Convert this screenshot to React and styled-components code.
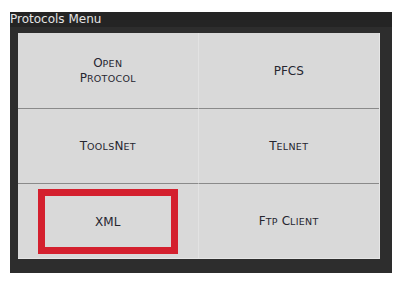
import styled, { createGlobalStyle } from 'styled-components';

const GlobalStyle = createGlobalStyle`
  body {
    margin: 0;
    background: #fff;
    font-family: "DejaVu Sans", Verdana, sans-serif;
  }
`;

const protocols = [
  { id: 'open', label: ['Open', 'Protocol'] },
  { id: 'pfcs', label: ['PFCS'] },
  { id: 'toolsnet', label: ['ToolsNet'] },
  { id: 'telnet', label: ['Telnet'] },
  { id: 'xml', label: ['XML'], selected: true },
  { id: 'ftp', label: ['Ftp Client'] },
];

// split text into runs so lowercase letters can be drawn as smaller capitals
const toRuns = (text) => text.match(/[a-z]+|[^a-z]+/g) || [];

const SmallCaps = ({ text }) =>
  toRuns(text).map((run, i) =>
    /[a-z]/.test(run) ? <Small key={i}>{run.toUpperCase()}</Small> : <span key={i}>{run}</span>
  );

const App = () => (
  <>
    <GlobalStyle />
    <Panel>
      <Title>Protocols Menu</Title>
      <Body>
        <Grid>
          {protocols.map((p) => (
            <Cell key={p.id}>
              <Button $selected={p.selected}>
                {p.label.map((line) => (
                  <Line key={line}>
                    <SmallCaps text={line} />
                  </Line>
                ))}
              </Button>
            </Cell>
          ))}
        </Grid>
      </Body>
    </Panel>
  </>
);

const Panel = styled.div`
  margin: 12px 0 0 10px;
  width: 382px;
  height: 261px;
  background: #2d2d2d;
  display: flex;
  flex-direction: column;
`;

const Title = styled.div`
  height: 15px;
  line-height: 15px;
  background: #242424;
  color: #e4e4e4;
  font-size: 12px;
`;

const Body = styled.div`
  flex: 1;
  padding: 6px 12px 15px 8px;
`;

const Grid = styled.div`
  display: grid;
  grid-template-columns: 1fr 1fr;
  grid-template-rows: repeat(3, 75px);
  background: #d9d9d9;
  border-right: 1px solid #e6e6e6;
  border-bottom: 1px solid #e6e6e6;
`;

const Cell = styled.div`
  display: flex;
  padding: 5px 20px 4px;
  &:nth-child(odd) {
    border-right: 1px solid #e2e2e2;
  }
  &:nth-child(n + 3) {
    border-top: 1px solid #8a8a8a;
  }
`;

const Button = styled.div`
  flex: 1;
  display: flex;
  flex-direction: column;
  align-items: center;
  justify-content: center;
  border: 7px solid ${(p) => (p.$selected ? '#d4202e' : 'transparent')};
  color: #262630;
  font-size: 12px;
  line-height: 14px;
`;

const Line = styled.span`
  white-space: nowrap;
`;

const Small = styled.span`
  font-size: 9.5px;
  letter-spacing: 0.3px;
`;

export default App;
